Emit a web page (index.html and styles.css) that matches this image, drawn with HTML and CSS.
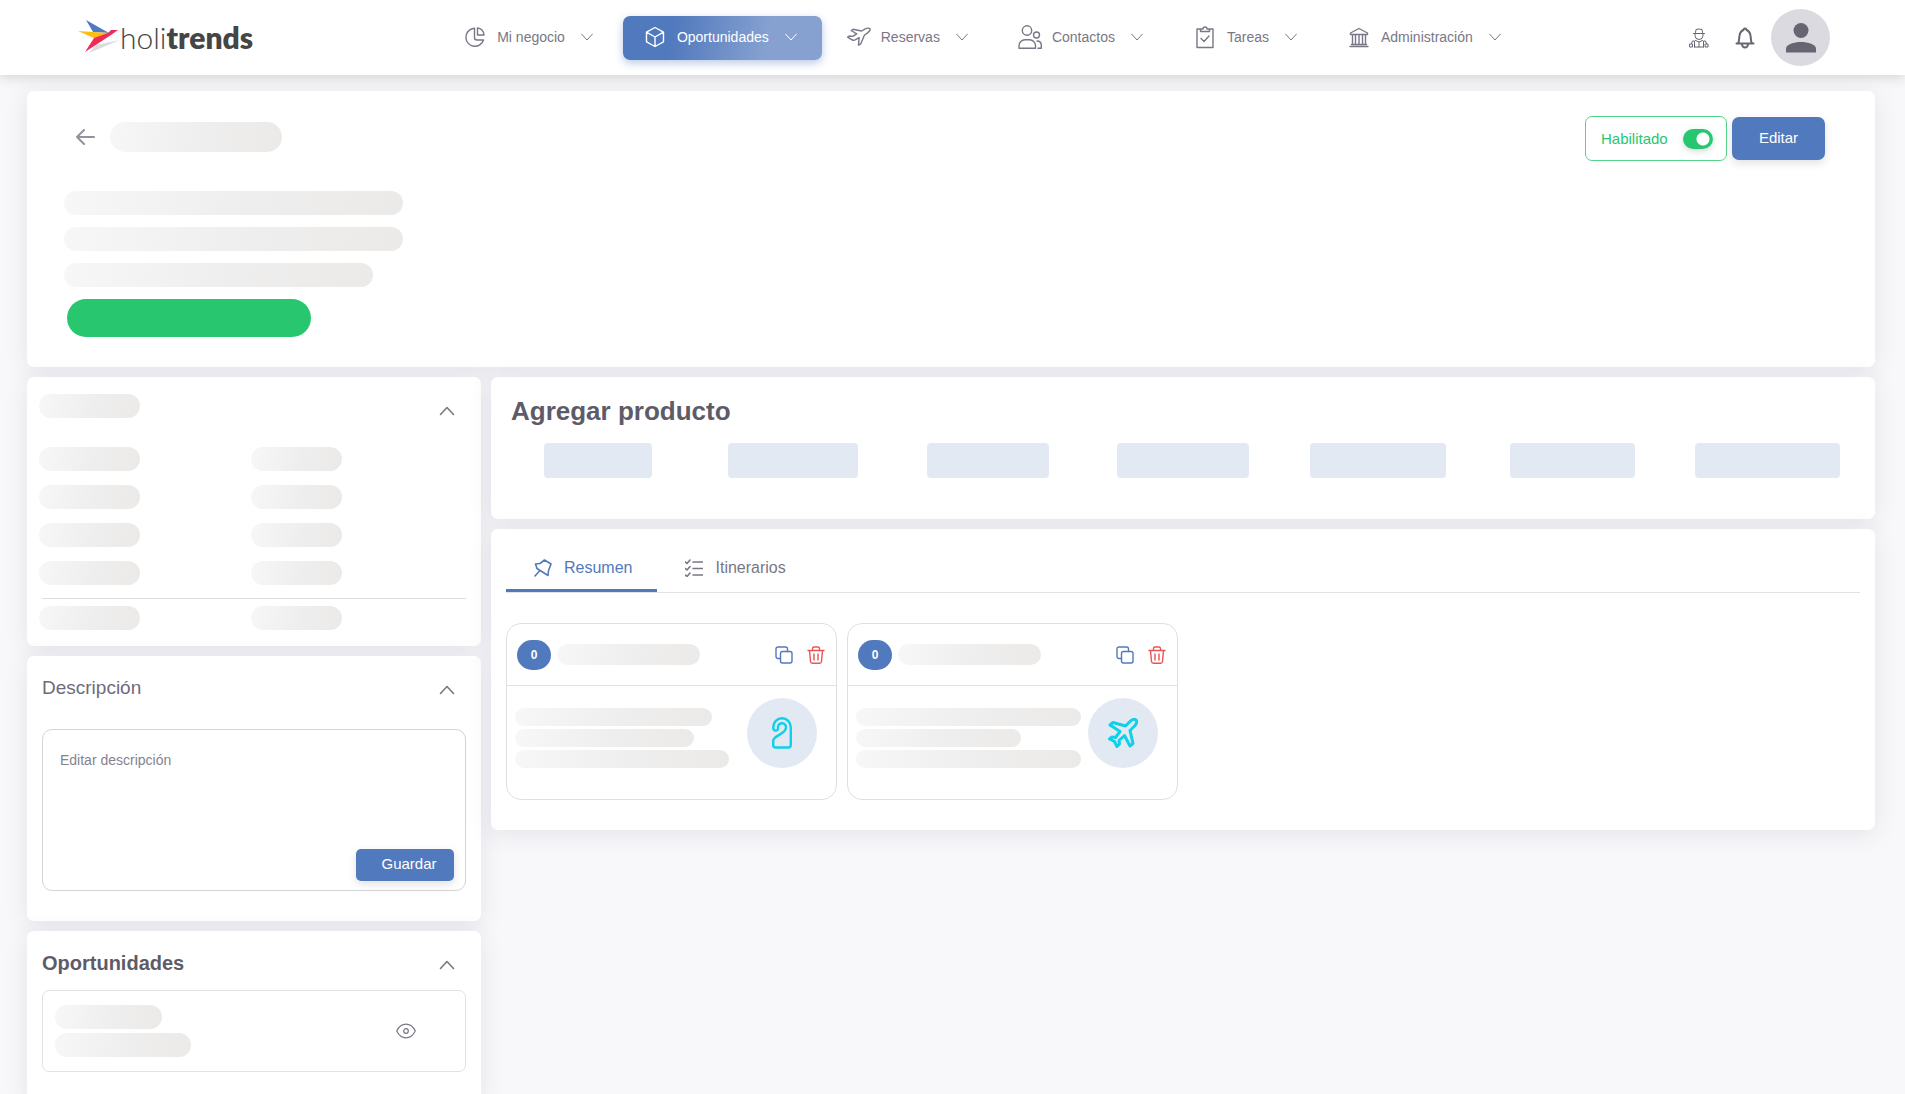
FILE: index.html
```html
<!DOCTYPE html>
<html lang="es">
<head>
<meta charset="utf-8">
<meta name="viewport" content="width=device-width, initial-scale=1">
<title>Holitrends - Oportunidades</title>
<link rel="stylesheet" href="styles.css">
</head>
<body>
<svg class="sprite" aria-hidden="true">
  <symbol id="down" viewBox="0 0 12 12"><path d="M0.500 3l5.500 6 5.500-6"/></symbol>
  <symbol id="up" viewBox="0 0 20 20"><path d="M3.500 13.500l6.500-7 6.500 7"/></symbol>
  <symbol id="copy" viewBox="0 0 18 18"><rect x="5.500" y="5.500" width="11.500" height="11.500" rx="2"/><path d="M5.500 12.500H3a2 2 0 0 1-2-2V3a2 2 0 0 1 2-2h7.500a2 2 0 0 1 2 2v2.500"/></symbol>
  <symbol id="trash" viewBox="0 0 18 18"><path d="M1 4.500h16M5.500 4.500V2.500A1.500 1.500 0 0 1 7 1h4a1.500 1.500 0 0 1 1.500 1.500v2M2.500 4.500l1 11A2 2 0 0 0 5.500 17.300h7a2 2 0 0 0 2-1.800l1-11M7 8v6M11 8v6"/></symbol>
</svg>

<header class="topbar">
  <a class="logo" href="#" aria-label="holitrends">
    <svg class="logo-bird" viewBox="0 0 42 34" aria-hidden="true">
      <path fill="#dcdcdc" d="M11 33L18 25l24-5-7 3z"/>
      <path fill="#4f7bc2" d="M8 0l23 13-16-1z"/>
      <path fill="#fdbe14" d="M0 11l31 2-13 6z"/>
      <path fill="#ef2b56" d="M7 32l9-14 14-5 3-3h7l-7 5z"/>
    </svg>
    <span class="logo-text">holi<b>trends</b></span>
  </a>
  <nav class="menu" aria-label="Principal">
    <button type="button" class="menu-item">
      <svg class="menu-icon" viewBox="0 0 24 24"><path d="M10 3.500a9 9 0 1 0 10.500 11.500H14a2.500 2.500 0 0 1-2.500-2.500V3.300zM14.500 3v7H21a7 7 0 0 0-6.500-7z"/></svg>
      <span>Mi negocio</span><svg class="menu-arrow"><use href="#down"/></svg>
    </button>
    <button type="button" class="menu-item active">
      <svg class="menu-icon" viewBox="0 0 24 24"><path d="M12 2.500l8.500 4.700v9.600L12 21.500l-8.500-4.700V7.200zM3.500 7.200L12 12l8.500-4.800M12 12v9.500"/></svg>
      <span>Oportunidades</span><svg class="menu-arrow"><use href="#down"/></svg>
    </button>
    <button type="button" class="menu-item">
      <svg class="menu-icon" viewBox="0 0 24 24"><path d="M22.800 3.600c-1.400-.9-3.600-.3-5 .5L14.500 6 6.200 4.300l-2 1.200 5.500 3.300-4 2.600-3.400-.4-1.700 1.100 4.500 2.700c1 .6 2 .5 3 0l4-2.200-.600 7.500 2.200-1.200 3.700-8.700 3.500-2.600c1.300-1 2.900-2.700 1.900-4z"/></svg>
      <span>Reservas</span><svg class="menu-arrow"><use href="#down"/></svg>
    </button>
    <button type="button" class="menu-item">
      <svg class="menu-icon" viewBox="0 0 24 24"><circle cx="9" cy="5.500" r="4.700"/><circle cx="18.500" cy="10" r="3"/><path d="M1 23.300v-2.500a6 6 0 0 1 6-6h4.500a6 6 0 0 1 6 6v2.500zM19 16c2.800 0 4.300 2 4.300 4.200v3.100H20"/></svg>
      <span>Contactos</span><svg class="menu-arrow"><use href="#down"/></svg>
    </button>
    <button type="button" class="menu-item">
      <svg class="menu-icon" viewBox="0 0 24 24"><path d="M7.500 4H4v18.500h16V4h-3.500M7.500 6.500V4H10a2 2 0 0 1 4 0h2.500v2.500zM8 13.500l3 3 5-5.500"/></svg>
      <span>Tareas</span><svg class="menu-arrow"><use href="#down"/></svg>
    </button>
    <button type="button" class="menu-item">
      <svg class="menu-icon" viewBox="0 0 24 24"><path d="M3.500 9.500v-1.500L12 3.500 20.500 8v1.500zM3 21.500h18M4.500 19.500h15M5.500 10v9M8.500 10v9M12 10v9M15.500 10v9M18.500 10v9"/></svg>
      <span>Administración</span><svg class="menu-arrow"><use href="#down"/></svg>
    </button>
  </nav>
  <div class="actions">
    <button type="button" class="icon-btn" aria-label="Asesor">
      <svg width="20" height="20" viewBox="0 0 20 20"><path d="M6.500 4.500L7 1.500q3-1 6 0l.5 3M4.500 5.500h11M6 6v1.500a4 4 0 0 0 8 0V6M6.500 12.500L10 14l3.500-1.500M5.500 19v-6L3.500 13l-1 2.500M14.500 19v-6l2 0 1 2.500M10 14v5M5.500 19h9M1 16h2.500v3H1zM16.500 16H19v3h-2.500z"/></svg>
    </button>
    <button type="button" class="icon-btn" aria-label="Notificaciones">
      <svg class="bell" width="20" height="22" viewBox="0 0 20 22"><path d="M1.500 16.500h17M3 16.500c1.500-2.500 1-5.500 1.500-8C5 5.500 7 3.500 8.500 3a1.500 1.500 0 0 1 3 0c1.500.5 3.500 2.500 4 5.500.5 2.500 0 5.500 1.500 8M7 17a3 3.500 0 0 0 6 0"/></svg>
    </button>
    <button type="button" class="avatar" aria-label="Perfil">
      <svg width="30" height="30" viewBox="0 0 30 30"><circle cx="15" cy="7.500" r="7.500"/><path d="M0 29.500v-4c0-4 8-6.500 15-6.500s15 2.500 15 6.500v4z"/></svg>
    </button>
  </div>
</header>

<main class="page">
  <section class="card summary">
    <div class="summary-top">
      <div class="summary-name">
        <button type="button" class="back" aria-label="Volver"><svg width="20" height="16" viewBox="0 0 20 16"><path d="M18 8H1M8 1L1 8l7 7"/></svg></button>
        <span class="skel skel-title"></span>
      </div>
      <label class="enabled" for="enabled">Habilitado <input type="checkbox" role="switch" id="enabled" class="switch" checked></label>
      <button type="button" class="btn btn-edit">Editar</button>
    </div>
    <div class="summary-lines">
      <span class="skel skel-line"></span>
      <span class="skel skel-line"></span>
      <span class="skel skel-line short"></span>
      <span class="status"></span>
    </div>
  </section>

  <div class="columns">
    <aside class="side">
      <section class="card side-card details">
        <div class="card-head">
          <span class="skel skel-key"></span>
          <button type="button" class="toggle" aria-label="Contraer"><svg width="20" height="20"><use href="#up"/></svg></button>
        </div>
        <div class="pairs">
          <span class="skel skel-key"></span><span class="skel skel-value"></span>
          <span class="skel skel-key"></span><span class="skel skel-value"></span>
          <span class="skel skel-key"></span><span class="skel skel-value"></span>
          <span class="skel skel-key"></span><span class="skel skel-value"></span>
        </div>
        <hr class="rule">
        <div class="pairs">
          <span class="skel skel-key"></span><span class="skel skel-value"></span>
        </div>
      </section>

      <section class="card side-card">
        <div class="card-head">
          <h2 class="head-light"><label for="description">Descripción</label></h2>
          <button type="button" class="toggle" aria-label="Contraer"><svg width="20" height="20"><use href="#up"/></svg></button>
        </div>
        <form class="editor">
          <textarea id="description" placeholder="Editar descripción"></textarea>
          <button type="button" class="btn btn-save">Guardar</button>
        </form>
      </section>

      <section class="card side-card">
        <div class="card-head">
          <h2 class="head-bold">Oportunidades</h2>
          <button type="button" class="toggle" aria-label="Contraer"><svg width="20" height="20"><use href="#up"/></svg></button>
        </div>
        <div class="opportunity">
          <div class="opportunity-lines">
            <span class="skel skel-name"></span>
            <span class="skel skel-detail"></span>
          </div>
          <button type="button" class="toggle" aria-label="Ver"><svg width="20" height="16" viewBox="0 0 20 16"><path d="M.700 8C3 3.500 6 1.200 10 1.200S17 3.500 19.300 8C17 12.500 14 14.800 10 14.800S3 12.500.700 8z"/><circle cx="10" cy="8" r="2.300"/></svg></button>
        </div>
      </section>
    </aside>

    <div class="content">
      <section class="card products">
        <h1>Agregar producto</h1>
        <div class="product-list">
          <span class="chip" style="width:108px"></span>
          <span class="chip" style="width:130px"></span>
          <span class="chip" style="width:122px"></span>
          <span class="chip" style="width:132px"></span>
          <span class="chip" style="width:136px"></span>
          <span class="chip" style="width:125px"></span>
          <span class="chip" style="width:145px"></span>
        </div>
      </section>

      <section class="card trips">
        <div class="tabs" role="tablist">
          <button type="button" class="tab selected" role="tab" aria-selected="true">
            <svg width="18" height="18" viewBox="0 0 18 18"><path d="M1 17l4.500-5M10.500 1l6.500 4-2.500 6.500-.5 5L3 9.500 1.500 5 6 4.500z"/></svg>Resumen
          </button>
          <button type="button" class="tab" role="tab" aria-selected="false">
            <svg width="18" height="18" viewBox="0 0 18 18"><path d="M8 3h9.500M8 9.500h9.500M8 16h9.500M.500 3l1.500 1.500L5 1M.500 9.500L2 11l3-3.500M.500 16L2 17.500 5 14"/></svg>Itinerarios
          </button>
        </div>
        <div class="trip-list">
          <article class="trip">
            <div class="trip-head">
              <span class="count">0</span><span class="skel skel-trip"></span>
              <button type="button" class="tool copy" aria-label="Copiar"><svg width="18" height="18"><use href="#copy"/></svg></button>
              <button type="button" class="tool trash" aria-label="Eliminar"><svg width="18" height="18"><use href="#trash"/></svg></button>
            </div>
            <div class="trip-body">
              <div class="trip-lines">
                <span class="skel" style="width:197px"></span>
                <span class="skel" style="width:179px"></span>
                <span class="skel" style="width:214px"></span>
              </div>
              <span class="kind"><svg width="20" height="32" viewBox="0 0 20 32"><path d="M1.200 10.500a8.800 9.300 0 0 1 17.600 0V28a2.500 2.500 0 0 1-2.500 2.500H3.700A2.500 2.500 0 0 1 1.200 28v-4c0-6 12.800-6.500 12.800-13.500a4 4 0 0 0-8-.5v1.500c0 3-4.800 3-4.800-1z"/></svg></span>
            </div>
          </article>
          <article class="trip">
            <div class="trip-head">
              <span class="count">0</span><span class="skel skel-trip"></span>
              <button type="button" class="tool copy" aria-label="Copiar"><svg width="18" height="18"><use href="#copy"/></svg></button>
              <button type="button" class="tool trash" aria-label="Eliminar"><svg width="18" height="18"><use href="#trash"/></svg></button>
            </div>
            <div class="trip-body">
              <div class="trip-lines">
                <span class="skel" style="width:225px"></span>
                <span class="skel" style="width:165px"></span>
                <span class="skel" style="width:225px"></span>
              </div>
              <span class="kind"><svg class="plane" width="30" height="30" viewBox="0 0 30 30"><path d="M28 2c-2-1.500-4.500 0-6 1.500L17.500 8 5 4.500 2 7l10 6.500-4.500 6-3.500-.5L1.500 21l5 2.500L9 28.500l2.500-2.500-.5-3.500 5.500-5 5.500 10.500 3-2.500L22 12.500 26.500 8C28 6.500 29.500 4 28 2z"/></svg></span>
            </div>
          </article>
        </div>
      </section>
    </div>
  </div>
</main>
</body>
</html>
```

FILE: styles.css
```css
* {
  box-sizing: border-box;
}

body {
  margin: 0;
  background: #f8f8fa;
  color: #797785;
  font-family: "Liberation Sans", Arial, sans-serif;
  font-size: 14px;
}

button {
  margin: 0;
  padding: 0;
  border: 0;
  background: none;
  color: inherit;
  font: inherit;
  cursor: pointer;
}

svg {
  display: block;
  flex: none;
  fill: none;
  stroke: currentColor;
  stroke-linecap: round;
  stroke-linejoin: round;
}

h1,
h2 {
  margin: 0;
  color: #5e5b69;
}

.sprite {
  position: absolute;
  width: 0;
  height: 0;
}

/* Top bar */
.topbar {
  position: relative;
  display: flex;
  align-items: center;
  justify-content: space-between;
  height: 75px;
  padding: 0 75px 0 78px;
  background: #fff;
  box-shadow: 0 2px 12px rgba(60, 60, 70, 0.2);
}

.logo {
  display: flex;
  align-items: center;
  width: 202px;
  padding-bottom: 2px;
  color: #454545;
  text-decoration: none;
}

.logo-bird {
  width: 42px;
  height: 34px;
  stroke: none;
}

.logo-text {
  font-family: Lato, sans-serif;
  font-size: 30px;
  font-weight: 300;
  line-height: 36px;
}

.logo-text b {
  font-weight: 800;
}

.menu {
  display: flex;
  gap: 5px;
}

.menu-item {
  display: flex;
  align-items: center;
  height: 44px;
  padding: 0 25px 1px 20px;
  border-radius: 7px;
  white-space: nowrap;
}

.menu-icon {
  width: 24px;
  height: 24px;
  margin-right: 10px;
  stroke-width: 1.4;
}

.menu-arrow {
  width: 12px;
  height: 12px;
  margin-left: 16px;
}

.menu-item.active {
  background: linear-gradient(100deg, #5179bd 25%, #86a1d0 72%);
  box-shadow: 0 3px 8px rgba(81, 121, 189, 0.4);
  color: #fff;
}

.actions {
  display: flex;
  align-items: center;
  color: #686573;
}

.icon-btn {
  margin-right: 26px;
}

.icon-btn + .icon-btn {
  margin-right: 16px;
}

.bell {
  stroke-width: 2;
}

.avatar {
  display: grid;
  place-items: center;
  width: 59px;
  height: 57px;
  border-radius: 50%;
  background: #dbdae0;
}

.avatar svg {
  fill: currentColor;
  stroke: none;
}

/* Page structure */
.page {
  padding: 16px 30px 0 27px;
}

.columns {
  display: flex;
  align-items: flex-start;
  gap: 10px;
  margin-top: 10px;
}

.side {
  display: flex;
  flex: none;
  flex-direction: column;
  gap: 10px;
  width: calc(25% - 8px);
}

.content {
  display: flex;
  flex: 1;
  flex-direction: column;
  gap: 10px;
  min-width: 0;
}

.card {
  border-radius: 7px;
  background: #fff;
  box-shadow: 0 4px 24px rgba(50, 40, 90, 0.1);
}

/* Loading placeholders */
.skel {
  display: block;
  flex: none;
  height: 24px;
  border-radius: 15px;
  background: linear-gradient(100deg, #f7f7f7, #efeeee 55%, #ebeae8);
}

.skel-title {
  width: 172px;
  height: 30px;
}

.skel-line {
  width: 339px;
}

.skel-line.short {
  width: 309px;
}

.skel-key {
  width: 101px;
}

.skel-value {
  width: 91px;
}

.skel-name {
  width: 107px;
}

.skel-detail {
  width: 136px;
}

.skel-trip {
  width: 143px;
  height: 21px;
}

/* Summary */
.summary {
  padding: 25px 50px 30px 37px;
}

.summary-top {
  display: flex;
  align-items: center;
  height: 45px;
}

.summary-name {
  display: flex;
  align-items: center;
  align-self: flex-start;
  padding-top: 6px;
}

.back {
  margin: 0 14px 0 12px;
}

.back svg {
  stroke-width: 2;
  opacity: 0.8;
}

.enabled {
  display: flex;
  align-items: center;
  justify-content: space-between;
  width: 142px;
  height: 45px;
  margin: 0 5px 0 auto;
  padding: 0 13px 0 15px;
  border: 1px solid #54d58a;
  border-radius: 7px;
  color: #28c76f;
  font-size: 15px;
}

.switch {
  width: 30px;
  height: 20px;
  margin: 0;
  border-radius: 10px;
  background: radial-gradient(circle at 20px 10px, #fff 6px, #28c76f 7px);
  box-shadow: 0 2px 6px rgba(40, 60, 50, 0.2);
  appearance: none;
}

.btn {
  padding-bottom: 3px;
  background: #5179bd;
  box-shadow: 0 3px 8px rgba(60, 60, 80, 0.16);
  color: #fff;
  font-size: 15px;
}

.btn-edit {
  width: 93px;
  height: 43px;
  border-radius: 7px;
}

.summary-lines {
  display: grid;
  gap: 12px;
  margin-top: 30px;
}

.status {
  width: 244px;
  height: 38px;
  margin-left: 3px;
  border-radius: 19px;
  background: #28c76f;
}

/* Side cards */
.side-card {
  padding: 0 15px 30px;
}

.card-head {
  display: flex;
  align-items: flex-end;
  justify-content: space-between;
  height: 44px;
  padding: 17px 9px 0 0;
}

.card-head h2 {
  line-height: 24px;
}

.card-head .skel {
  align-self: flex-start;
}

.head-light {
  color: #6e6b7b;
  font-size: 19px;
  font-weight: 400;
}

.head-bold {
  font-size: 20px;
}

.toggle svg {
  stroke-width: 1.2;
}

.card-head .toggle svg {
  stroke-width: 1.6;
}

.details {
  padding: 0 15px 16px 12px;
}

.pairs {
  display: grid;
  grid-template-columns: 1fr 1fr;
  gap: 14px 0;
  margin-right: 4px;
}

.card-head + .pairs {
  margin-top: 26px;
}

.rule {
  height: 1px;
  margin: 13px 0 7px 3px;
  border: 0;
  background: #dedede;
}

.editor {
  display: flex;
  flex-direction: column;
  height: 162px;
  margin-top: 29px;
  padding: 0 11px 9px 0;
  border: 1px solid #d4d4d6;
  border-radius: 10px;
}

.editor textarea {
  flex: 1;
  padding: 22px 17px;
  border: 0;
  outline: 0;
  background: none;
  color: inherit;
  font: inherit;
  resize: none;
}

.editor textarea::placeholder {
  color: #85838f;
}

.btn-save {
  align-self: flex-end;
  width: 98px;
  height: 32px;
  padding-left: 8px;
  border-radius: 5px;
}

.opportunity {
  display: flex;
  align-items: center;
  justify-content: space-between;
  margin-top: 15px;
  padding: 14px 49px 14px 12px;
  border: 1px solid #e2e2e4;
  border-radius: 7px;
}

.opportunity-lines {
  display: grid;
  gap: 4px;
}

/* Products */
.products {
  padding: 18px 10px 41px;
}

.products h1 {
  padding-left: 10px;
  font-size: 26px;
  line-height: 32px;
}

.product-list {
  display: grid;
  grid-template-columns: repeat(7, 1fr);
  justify-items: center;
  margin-top: 16px;
}

.chip {
  height: 35px;
  border-radius: 4px;
  background: #e3e9f3;
}

/* Trips */
.trips {
  padding: 12px 15px 30px;
}

.tabs {
  display: flex;
  border-bottom: 1px solid #e2e2e4;
}

.tab {
  display: flex;
  align-items: center;
  gap: 12px;
  height: 51px;
  padding: 6px 25px 0 28px;
  border-bottom: 3px solid transparent;
  font-size: 16px;
}

.tab svg {
  stroke-width: 1.6;
}

.tab.selected {
  border-color: #5179bd;
  color: #5179bd;
}

.trip-list {
  display: flex;
  flex-wrap: wrap;
  gap: 10px;
  margin-top: 30px;
}

.trip {
  width: 331px;
  border: 1px solid #dfdfe1;
  border-radius: 15px;
}

.trip-head {
  display: flex;
  align-items: center;
  height: 62px;
  padding: 0 11px 0 10px;
  border-bottom: 1px solid #e2e2e4;
}

.count {
  width: 34px;
  height: 30px;
  margin-right: 6px;
  border-radius: 15px;
  background: #5179bd;
  color: #fff;
  font-size: 12px;
  font-weight: 700;
  line-height: 30px;
  text-align: center;
}

.tool svg {
  width: 18px;
  stroke-width: 1.4;
}

.tool.copy {
  margin: 0 14px 0 auto;
  color: #5179bd;
}

.tool.trash {
  color: #ea5455;
}

.trip-body {
  display: flex;
  align-items: flex-start;
  justify-content: space-between;
  padding: 12px 19px 31px 8px;
}

.trip-lines {
  display: grid;
  gap: 3px;
  padding-top: 10px;
}

.trip-lines .skel {
  height: 18px;
}

.kind {
  display: grid;
  place-items: center;
  width: 70px;
  height: 70px;
  border-radius: 50%;
  background: #e3e9f3;
  color: #0fd0ea;
}

.kind svg {
  stroke-width: 2.4;
}

.kind .plane {
  stroke-width: 3;
}
```
